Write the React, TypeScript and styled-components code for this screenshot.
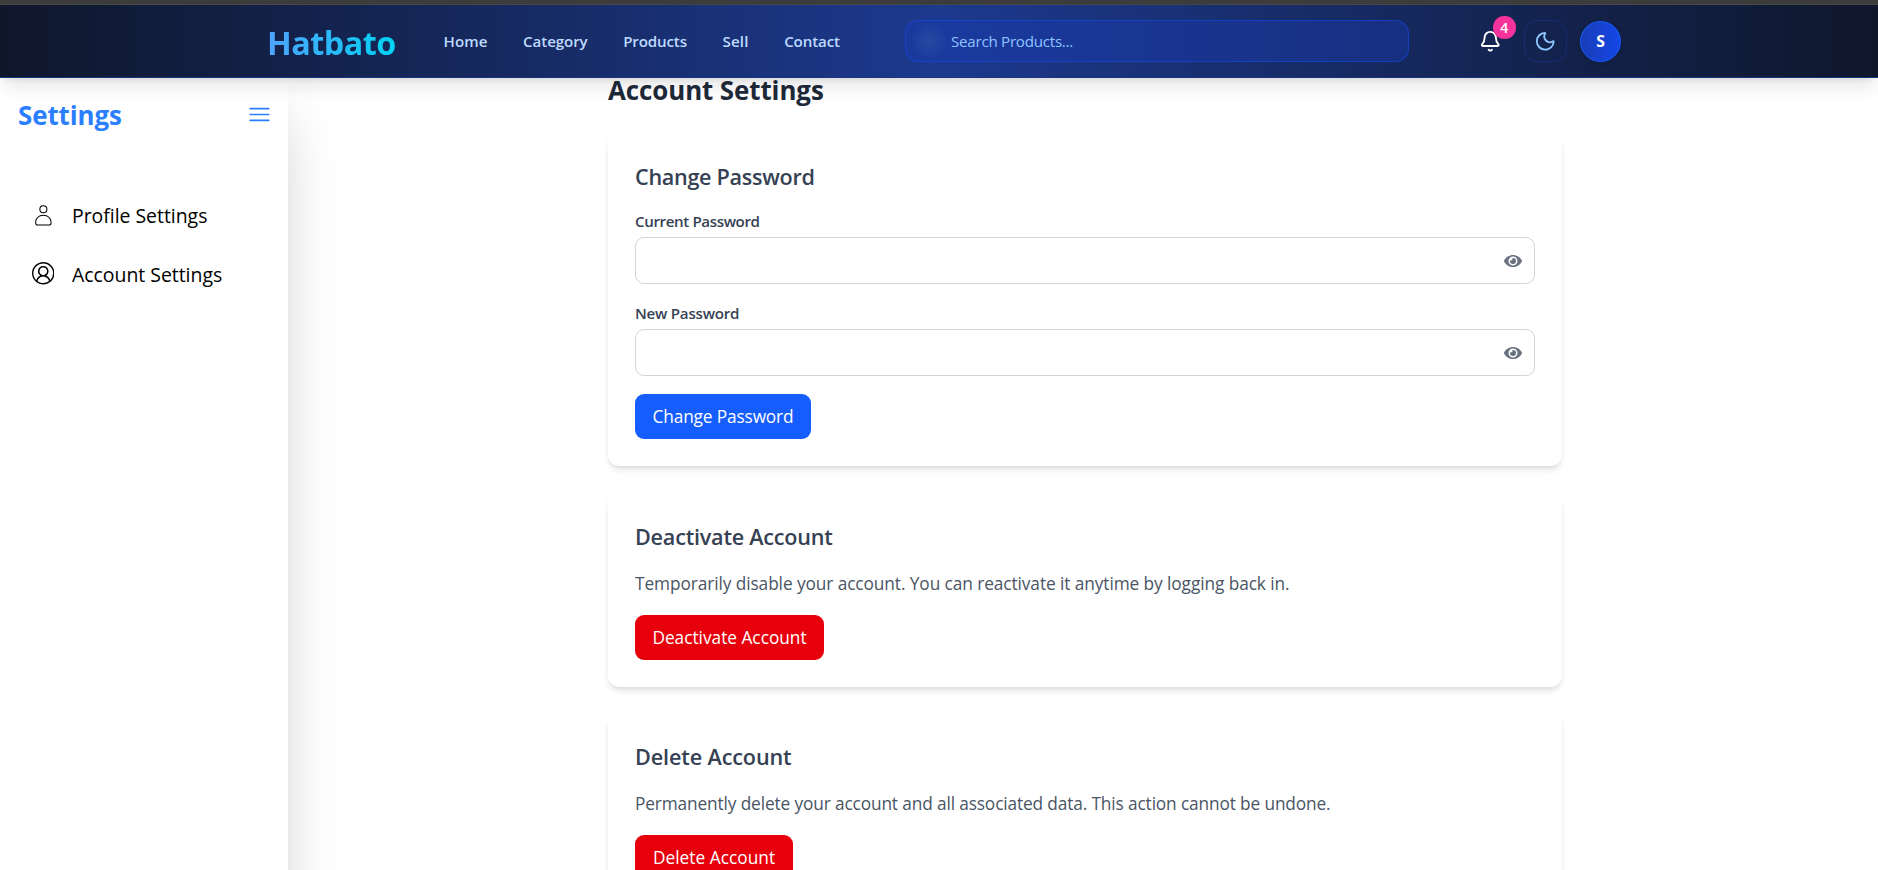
import React from "react";
import styled, { createGlobalStyle } from "styled-components";
import { Bell, Moon } from "lucide-react";
import { FaEye } from "react-icons/fa";
import { CiUser } from "react-icons/ci";
import { VscAccount } from "react-icons/vsc";

const Page = createGlobalStyle`
  *, *::before, *::after { box-sizing: border-box; }
  body { margin: 0; background: #fff; overflow: hidden; font-family: "Open Sans", "Noto Sans", sans-serif; }
  h1, h2, h3, p { margin: 0; }
  button, input { font-family: inherit; }
`;

const Shell = styled.div`
  display: flex;
  flex-direction: column;
  height: 870px;
  overflow: hidden;
`;

const WindowEdge = styled.div`
  flex: none;
  height: 5px;
  background: #3c3c3c;
  border-bottom: 1px solid #494949;
`;

const Header = styled.header`
  position: relative;
  z-index: 2;
  flex: none;
  height: 73px;
  display: flex;
  align-items: center;
  padding: 0 257px 0 267px;
  border-bottom: 1px solid #193280;
  background: linear-gradient(to right, #0f172b, #1c398e 50%, #0f172b);
  box-shadow: 0 11px 17px -3.4px rgba(0, 0, 0, 0.1), 0 4.5px 7px -4.5px rgba(0, 0, 0, 0.1);
`;

const Logo = styled.div`
  width: 130px;
  padding-top: 2px;
  font-size: 32.4px;
  line-height: 40px;
  font-weight: 700;
  letter-spacing: -0.55px;
  background: linear-gradient(to right, #51a2ff, #00d3f2);
  background-clip: text;
  -webkit-background-clip: text;
  color: transparent;
`;

const Nav = styled.nav`
  display: flex;
  width: 458px;
  gap: 35.5px;
  padding-left: 46.5px;
`;

const NavLink = styled.a<{ $track: number }>`
  font-size: 15.12px;
  line-height: 22px;
  font-weight: 600;
  letter-spacing: ${(p) => p.$track}px;
  color: #bedbff;
`;

const SearchBox = styled.div`
  display: flex;
  align-items: center;
  width: 504px;
  height: 42px;
  margin-left: 50px;
  padding-left: 45px;
  border: 1px solid rgba(20, 71, 230, 0.6);
  border-radius: 13.5px;
  background: radial-gradient(circle at 23px 50%, rgba(60, 105, 165, 0.35), rgba(60, 105, 165, 0) 18px), rgba(25, 60, 184, 0.4);
  color: #8ec5ff;
  font-size: 15.12px;
  letter-spacing: -0.24px;
`;

const Actions = styled.div`
  display: flex;
  align-items: center;
  margin-left: auto;
`;

const BellButton = styled.div`
  position: relative;
  display: flex;
  margin-right: 23px;
  color: #fff;
`;

const Badge = styled.span`
  position: absolute;
  left: 14.5px;
  top: -13.5px;
  width: 22.5px;
  height: 22.5px;
  border-radius: 50%;
  background: #f6339a;
  font-size: 14px;
  font-weight: 600;
  line-height: 24px;
  text-align: center;
`;

const ThemeButton = styled.div`
  display: flex;
  align-items: center;
  justify-content: center;
  width: 43px;
  height: 42px;
  margin-right: 13px;
  border: 1px solid rgba(25, 60, 184, 0.35);
  border-radius: 13.5px;
  color: #8ec5ff;
`;

const Avatar = styled.div`
  width: 41px;
  height: 41px;
  border: 1px solid #155dfc;
  border-radius: 50%;
  background: linear-gradient(to right, #193cb8, #1447e6);
  color: #fff;
  font-size: 15.75px;
  font-weight: 700;
  line-height: 39px;
  text-align: center;
  box-shadow: 0 4px 7px rgba(0, 0, 0, 0.12);
`;

const Body = styled.div`
  display: flex;
  flex: 1;
  min-height: 0;
`;

const Sidebar = styled.aside`
  flex: none;
  width: 288px;
  height: 850px;
  background: #fff;
  box-shadow: 0 28px 56px -13.5px rgba(0, 0, 0, 0.25);
`;

const SidebarHead = styled.div`
  display: flex;
  align-items: center;
  justify-content: space-between;
  height: 72px;
  padding: 0 15px 0 18px;
  color: #2b7fff;
`;

const SidebarTitle = styled.h2`
  padding-top: 2px;
  font-size: 25.9px;
  line-height: 36px;
  font-weight: 700;
  letter-spacing: -0.09px;
`;

const Menu = styled.div`
  padding-top: 36px;
`;

const MenuItem = styled.div`
  display: flex;
  align-items: center;
  height: 59px;
  padding-left: 29.5px;
`;

const MenuIcon = styled.span<{ $lift?: boolean }>`
  display: flex;
  justify-content: center;
  width: 27px;
  margin-right: 15.5px;
  padding-bottom: ${(p) => (p.$lift ? 2 : 0)}px;
`;

const MenuLabel = styled.span`
  font-size: 19.44px;
  line-height: 31.5px;
  letter-spacing: -0.02px;
  color: #000;
`;

const Main = styled.main`
  width: 954px;
  margin: -6px 0 0 320px;
`;

const Title = styled.h1`
  margin-bottom: 25.2px;
  font-size: 25.9px;
  line-height: 36px;
  font-weight: 700;
  letter-spacing: -0.08px;
  color: #1e2939;
`;

const Card = styled.section`
  padding: 27px;
  margin-bottom: 27px;
  border-radius: 11.25px;
  background: #fff;
  box-shadow: 0 4.5px 6.75px -1px rgba(0, 0, 0, 0.1), 0 2.25px 4.5px -2.25px rgba(0, 0, 0, 0.1);
`;

const CardTitle = styled.h3<{ $track: number }>`
  padding-top: 0.4px;
  margin-bottom: 17.6px;
  font-size: 21.6px;
  line-height: 31.5px;
  font-weight: 600;
  letter-spacing: ${(p) => p.$track}px;
  color: #364153;
`;

const Field = styled.label<{ $track: number }>`
  display: block;
  margin-bottom: 18px;
  font-size: 15.12px;
  line-height: 22.5px;
  font-weight: 600;
  letter-spacing: ${(p) => p.$track}px;
  color: #364153;
`;

const PasswordBox = styled.div`
  display: flex;
  align-items: center;
  height: 47.25px;
  margin-top: 4.5px;
  padding: 1px 12.5px 0 9px;
  border: 1px solid #d1d5dc;
  border-radius: 9px;
  color: #6a7282;
`;

const PasswordInput = styled.input`
  flex: 1;
  min-width: 0;
  border: 0;
  outline: 0;
  background: transparent;
`;

const CardText = styled.p<{ $track: number }>`
  padding-top: 0.3px;
  margin-bottom: 17.7px;
  font-size: 17.28px;
  line-height: 27px;
  letter-spacing: ${(p) => p.$track}px;
  color: #4a5565;
  white-space: nowrap;
`;

const ActionButton = styled.button<{ $danger?: boolean; $track: number; $width: number }>`
  display: block;
  width: ${(p) => p.$width}px;
  height: 45px;
  padding: 0;
  border: 0;
  border-radius: 9px;
  background: ${(p) => (p.$danger ? "#e7000b" : "#155dfc")};
  color: #fff;
  font-size: 17.28px;
  line-height: 27px;
  letter-spacing: ${(p) => p.$track}px;
`;

const links = [
  { label: "Home", track: 0.1 },
  { label: "Category", track: -0.09 },
  { label: "Products", track: -0.14 },
  { label: "Sell", track: 0.2 },
  { label: "Contact", track: -0.12 },
];

function PasswordField({ label, track }: { label: string; track: number }) {
  return (
    <Field $track={track}>
      {label}
      <PasswordBox>
        <PasswordInput type="password" />
        <FaEye size={18} />
      </PasswordBox>
    </Field>
  );
}

export default function App() {
  return (
    <Shell>
      <Page />
      <WindowEdge />
      <Header>
        <Logo>Hatbato</Logo>
        <Nav>
          {links.map((l) => (
            <NavLink key={l.label} $track={l.track}>{l.label}</NavLink>
          ))}
        </Nav>
        <SearchBox>Search Products...</SearchBox>
        <Actions>
          <BellButton>
            <Bell size={22.5} />
            <Badge>4</Badge>
          </BellButton>
          <ThemeButton><Moon size={22.5} /></ThemeButton>
          <Avatar>S</Avatar>
        </Actions>
      </Header>
      <Body>
        <Sidebar>
          <SidebarHead>
            <SidebarTitle>Settings</SidebarTitle>
            <svg width="27" height="27" viewBox="0 0 24 24" fill="none" stroke="currentColor" strokeWidth="1.5" strokeLinecap="round">
              <path d="M3.75 6.75h16.5M3.75 12h16.5M3.75 17.25h16.5" />
            </svg>
          </SidebarHead>
          <Menu>
            <MenuItem>
              <MenuIcon><CiUser size={24.75} /></MenuIcon>
              <MenuLabel>Profile Settings</MenuLabel>
            </MenuItem>
            <MenuItem>
              <MenuIcon $lift><VscAccount size={22.5} /></MenuIcon>
              <MenuLabel>Account Settings</MenuLabel>
            </MenuItem>
          </Menu>
        </Sidebar>
        <Main>
          <Title>Account Settings</Title>
          <Card>
            <CardTitle $track={-0.3}>Change Password</CardTitle>
            <PasswordField label="Current Password" track={-0.38} />
            <PasswordField label="New Password" track={-0.24} />
            <ActionButton $track={-0.14} $width={176}>Change Password</ActionButton>
          </Card>
          <Card>
            <CardTitle $track={-0.22}>Deactivate Account</CardTitle>
            <CardText $track={-0.082}>Temporarily disable your account. You can reactivate it anytime by logging back in.</CardText>
            <ActionButton $danger $track={-0.01} $width={189}>Deactivate Account</ActionButton>
          </Card>
          <Card>
            <CardTitle $track={-0.12}>Delete Account</CardTitle>
            <CardText $track={-0.13}>Permanently delete your account and all associated data. This action cannot be undone.</CardText>
            <ActionButton $danger $track={0.03} $width={158}>Delete Account</ActionButton>
          </Card>
        </Main>
      </Body>
    </Shell>
  );
}
